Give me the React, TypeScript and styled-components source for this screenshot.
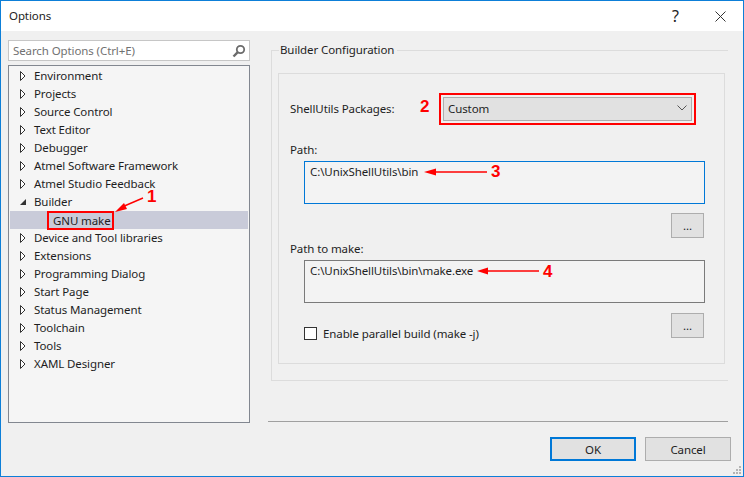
import React from "react";
import styled, { createGlobalStyle } from "styled-components";

const Global = createGlobalStyle`
  html, body {
    margin: 0;
    padding: 0;
    background: #f0f0f0;
  }
  * {
    box-sizing: border-box;
  }
`;

const Window = styled.div`
  position: relative;
  width: 744px;
  height: 477px;
  display: flex;
  flex-direction: column;
  overflow: hidden;
  background: #f0f0f0;
  border: 1px solid #0d7fd8;
  color: #1e1e1e;
  font-family: "Noto Sans", "Open Sans", sans-serif;
  font-size: 11.5px;
  letter-spacing: -0.1px;
`;

const TitleBar = styled.div`
  height: 30px;
  flex: none;
  display: flex;
  align-items: center;
  background: #fff;
  padding-left: 8px;
  color: #222;
`;

const TitleText = styled.div`
  flex: 1;
  margin-top: -1px;
`;

const TitleButton = styled.div`
  width: 45px;
  height: 30px;
  display: flex;
  align-items: center;
  justify-content: center;
  color: #222;
  font-size: 16px;
`;

const Body = styled.div`
  flex: 1;
  display: flex;
  min-height: 0;
`;

const LeftPane = styled.div`
  width: 260px;
  flex: none;
  padding: 9px 0 0 7px;
`;

const SearchBox = styled.div`
  width: 242px;
  height: 21px;
  display: flex;
  align-items: center;
  justify-content: space-between;
  background: #fff;
  border: 1px solid #c6c6c6;
  padding: 0 3px 0 4px;
  color: #717171;
`;

const Tree = styled.div`
  width: 242px;
  height: 358px;
  margin-top: 4px;
  padding: 1px;
  background: #f5f5f5;
  border: 1px solid #828790;
`;

const TreeRow = styled.div<{ $selected?: boolean; $child?: boolean }>`
  height: 18px;
  display: flex;
  align-items: center;
  padding-left: ${(p) => (p.$child ? "37px" : "10px")};
  background: ${(p) => (p.$selected ? "#c9cbd9" : "transparent")};
`;

const Caret = styled.svg`
  width: 6px;
  height: 10px;
  margin-right: 8px;
  flex: none;
`;

const TreeLabel = styled.span`
  white-space: nowrap;
  line-height: 14px;
  margin-top: -1px;
`;

const ChildLabel = styled.span`
  display: block;
  width: 67px;
  height: 19px;
  line-height: 15px;
  padding-left: 4px;
  border: 2px solid #ff0000;
  white-space: nowrap;
`;

const RightPane = styled.div`
  flex: 1;
  display: flex;
  flex-direction: column;
  padding-top: 12px;
  padding-right: 15px;
  padding-left: 7px;
`;

const OuterGroup = styled.div`
  position: relative;
  margin-left: 3px;
  margin-top: 7px;
  height: 331px;
  padding: 22px 3px 0 6px;
  border-left: 1px solid #dcdcdc;
  border-top: 1px solid #dcdcdc;
  border-bottom: 1px solid #dcdcdc;
`;

const Legend = styled.div`
  position: absolute;
  left: 7px;
  top: -9px;
  padding: 0 3px 0 1px;
  line-height: 16px;
  background: #f0f0f0;
`;

const InnerGroup = styled.div`
  height: 291px;
  padding: 19px 11px 0 11px;
  border: 1px solid #dcdcdc;
`;

const PackagesRow = styled.div`
  display: flex;
  align-items: center;
  height: 32px;
`;

const PackagesLabel = styled.div`
  width: 149px;
  flex: none;
  margin-top: -1px;
`;

const SelectFrame = styled.div`
  width: 257px;
  height: 32px;
  padding: 2px;
  border: 2px solid #ff0000;
`;

const Select = styled.div`
  height: 100%;
  display: flex;
  align-items: center;
  justify-content: space-between;
  padding: 0 4px 2px 4px;
  background: #e1e1e1;
  border: 1px solid #adadad;
`;

const FieldLabel = styled.div<{ $top: number }>`
  margin-top: ${(p) => p.$top}px;
  line-height: 16px;
`;

const PathBox = styled.div<{ $focused?: boolean }>`
  width: 401px;
  height: 43px;
  margin: 3px 0 0 14px;
  padding: 2px 5px;
  line-height: 16px;
  background: #f3f3f3;
  border: 1px solid ${(p) => (p.$focused ? "#0078d7" : "#7a7a7a")};
`;

const BrowseRow = styled.div<{ $top: number }>`
  display: flex;
  align-items: flex-start;
  width: 400px;
  height: 25px;
  margin: ${(p) => p.$top}px 0 0 14px;
`;

const BrowseButton = styled.div`
  width: 33px;
  height: 25px;
  margin-left: auto;
  display: flex;
  align-items: center;
  justify-content: center;
  background: #e1e1e1;
  border: 1px solid #adadad;
`;

const CheckLabel = styled.label`
  display: flex;
  align-items: center;
  gap: 6px;
  margin-top: 13px;
`;

const CheckBox = styled.span`
  width: 13px;
  height: 13px;
  background: #fff;
  border: 1px solid #333;
`;

const Separator = styled.div`
  height: 1px;
  margin-top: 40px;
  background: #a0a0a0;
`;

const Footer = styled.div`
  display: flex;
  justify-content: flex-end;
  gap: 9px;
  margin-top: 15px;
  margin-right: -3px;
`;

const DialogButton = styled.div<{ $primary?: boolean }>`
  width: 86px;
  height: 24px;
  display: flex;
  align-items: center;
  justify-content: center;
  background: #e1e1e1;
  border: ${(p) => (p.$primary ? "2px solid #0078d7" : "1px solid #adadad")};
`;

const Number = styled.span<{ $x: number; $y: number }>`
  position: absolute;
  left: ${(p) => p.$x}px;
  top: ${(p) => p.$y}px;
  font-family: "Liberation Sans", Arial, sans-serif;
  font-size: 17px;
  font-weight: 700;
  letter-spacing: 0;
  line-height: 12px;
  color: #ff0000;
`;

const ArrowLayer = styled.svg`
  position: absolute;
  left: -1px;
  top: -1px;
  width: 744px;
  height: 477px;
  pointer-events: none;
`;

const Grip = styled.svg`
  position: absolute;
  right: 1px;
  bottom: 1px;
  width: 10px;
  height: 10px;
`;

const topItems = [
  "Environment",
  "Projects",
  "Source Control",
  "Text Editor",
  "Debugger",
  "Atmel Software Framework",
  "Atmel Studio Feedback",
];

const bottomItems = [
  "Device and Tool libraries",
  "Extensions",
  "Programming Dialog",
  "Start Page",
  "Status Management",
  "Toolchain",
  "Tools",
  "XAML Designer",
];

const ClosedCaret = () => (
  <Caret viewBox="0 0 6 10">
    <path d="M0.5 0.5 L5 5 L0.5 9.5 Z" fill="#fff" stroke="#333" strokeWidth="1" />
  </Caret>
);

const OpenCaret = () => (
  <Caret viewBox="0 0 6 10">
    <path d="M0 8 L6 8 L6 2 Z" fill="#333" />
  </Caret>
);

const Arrow = ({ d, head }: { d: string; head: string }) => (
  <g>
    <path d={d} stroke="#ff0000" strokeWidth="1.4" fill="none" />
    <polygon points={head} fill="#ff0000" />
  </g>
);

const App = () => {
  return (
    <Window>
      <Global />
      <TitleBar>
        <TitleText>Options</TitleText>
        <TitleButton>?</TitleButton>
        <TitleButton>
          <svg width="11" height="11" viewBox="0 0 11 11">
            <path d="M0.5 0.5 L10.5 10.5 M10.5 0.5 L0.5 10.5" stroke="#333" strokeWidth="1" />
          </svg>
        </TitleButton>
      </TitleBar>
      <Body>
        <LeftPane>
          <SearchBox>
            <span>Search Options (Ctrl+E)</span>
            <svg width="14" height="14" viewBox="0 0 14 14">
              <circle cx="8.5" cy="5.5" r="3.7" fill="none" stroke="#6b6b6b" strokeWidth="1.8" />
              <path d="M5.8 8.2 L1.5 12.5" stroke="#6b6b6b" strokeWidth="2.4" />
            </svg>
          </SearchBox>
          <Tree>
            {topItems.map((item) => (
              <TreeRow key={item}>
                <ClosedCaret />
                <TreeLabel>{item}</TreeLabel>
              </TreeRow>
            ))}
            <TreeRow>
              <OpenCaret />
              <TreeLabel>Builder</TreeLabel>
            </TreeRow>
            <TreeRow $selected $child>
              <ChildLabel>GNU make</ChildLabel>
            </TreeRow>
            {bottomItems.map((item) => (
              <TreeRow key={item}>
                <ClosedCaret />
                <TreeLabel>{item}</TreeLabel>
              </TreeRow>
            ))}
          </Tree>
        </LeftPane>
        <RightPane>
          <OuterGroup>
            <Legend>Builder Configuration</Legend>
            <InnerGroup>
              <PackagesRow>
                <PackagesLabel>ShellUtils Packages:</PackagesLabel>
                <SelectFrame>
                  <Select>
                    <span>Custom</span>
                    <svg width="10" height="6" viewBox="0 0 10 6">
                      <path d="M0.5 0.5 L5 5 L9.5 0.5" fill="none" stroke="#555" strokeWidth="1" />
                    </svg>
                  </Select>
                </SelectFrame>
              </PackagesRow>
              <FieldLabel $top={17}>Path:</FieldLabel>
              <PathBox $focused>C:\UnixShellUtils\bin</PathBox>
              <BrowseRow $top={9}>
                <BrowseButton>...</BrowseButton>
              </BrowseRow>
              <FieldLabel $top={3}>Path to make:</FieldLabel>
              <PathBox>C:\UnixShellUtils\bin\make.exe</PathBox>
              <BrowseRow $top={10}>
                <CheckLabel>
                  <CheckBox />
                  Enable parallel build (make -j)
                </CheckLabel>
                <BrowseButton>...</BrowseButton>
              </BrowseRow>
            </InnerGroup>
          </OuterGroup>
          <Separator />
          <Footer>
            <DialogButton $primary>OK</DialogButton>
            <DialogButton>Cancel</DialogButton>
          </Footer>
        </RightPane>
      </Body>
      <ArrowLayer viewBox="0 0 744 477">
        <Arrow d="M143 198 L122 207" head="115,212 124,203 127,209" />
        <Arrow d="M487 172 L434 172" head="424,172 436,168.5 436,175.5" />
        <Arrow d="M539 271 L486 271" head="477,271 488,267.5 488,274.5" />
      </ArrowLayer>
      <Number $x={146} $y={190}>1</Number>
      <Number $x={419} $y={100}>2</Number>
      <Number $x={490} $y={165}>3</Number>
      <Number $x={542} $y={265}>4</Number>
      <Grip viewBox="0 0 10 10">
        <g fill="#b4b4b4">
          <rect x="7" y="1" width="2" height="2" />
          <rect x="4" y="4" width="2" height="2" />
          <rect x="7" y="4" width="2" height="2" />
          <rect x="1" y="7" width="2" height="2" />
          <rect x="4" y="7" width="2" height="2" />
          <rect x="7" y="7" width="2" height="2" />
        </g>
      </Grip>
    </Window>
  );
};

export default App;
